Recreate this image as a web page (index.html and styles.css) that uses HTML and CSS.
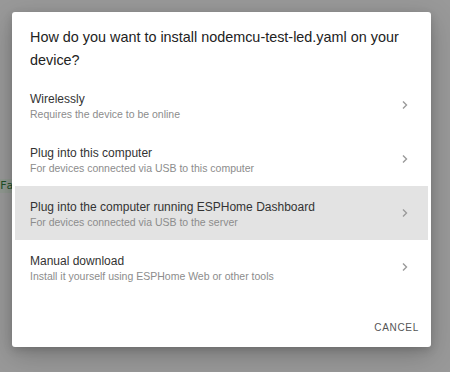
FILE: index.html
```html
<!DOCTYPE html>
<html lang="en">
<head>
    <meta charset="UTF-8">
    <title>Install</title>
    <link rel="stylesheet" href="styles.css">
</head>
<body>
    <div class="page">
        <div class="log">
            <span class="log-line">Failed to connect</span>
        </div>
        <div class="scrim"></div>

        <div class="dialog">
            <h2 class="dialog-title">How do you want to install nodemcu-test-led.yaml on your device?</h2>
            <div class="list">
                <div class="item">
                    <div class="item-text">
                        <div class="primary">Wirelessly</div>
                        <div class="secondary">Requires the device to be online</div>
                    </div>
                    <svg class="chevron" width="8" height="10" viewBox="0 0 8 10"><path d="M2 1.5 L5.5 5 L2 8.5" /></svg>
                </div>
                <div class="item">
                    <div class="item-text">
                        <div class="primary">Plug into this computer</div>
                        <div class="secondary">For devices connected via USB to this computer</div>
                    </div>
                    <svg class="chevron" width="8" height="10" viewBox="0 0 8 10"><path d="M2 1.5 L5.5 5 L2 8.5" /></svg>
                </div>
                <div class="item active">
                    <div class="item-text">
                        <div class="primary">Plug into the computer running ESPHome Dashboard</div>
                        <div class="secondary">For devices connected via USB to the server</div>
                    </div>
                    <svg class="chevron" width="8" height="10" viewBox="0 0 8 10"><path d="M2 1.5 L5.5 5 L2 8.5" /></svg>
                </div>
                <div class="item">
                    <div class="item-text">
                        <div class="primary">Manual download</div>
                        <div class="secondary">Install it yourself using ESPHome Web or other tools</div>
                    </div>
                    <svg class="chevron" width="8" height="10" viewBox="0 0 8 10"><path d="M2 1.5 L5.5 5 L2 8.5" /></svg>
                </div>
            </div>
            <div class="actions">
                <button class="cancel-btn">Cancel</button>
            </div>
        </div>
    </div>
</body>
</html>
```

FILE: styles.css
```css
body {
    margin: 0;
    font-family: 'Liberation Sans', Arial, sans-serif;
}

.page {
    position: relative;
    width: 450px;
    height: 372px;
    overflow: hidden;
    background: #e9e9e9;
}

.log {
    padding-top: 175px;
}

.log-line {
    display: inline-block;
    background: #dce8dc;
    color: #2f7a3c;
    font-family: 'DejaVu Sans Mono', monospace;
    font-size: 11px;
    line-height: 14px;
}

.scrim {
    position: absolute;
    inset: 0;
    background: rgba(0, 0, 0, 0.34);
}

.dialog {
    position: absolute;
    left: 12px;
    top: 12px;
    width: 419px;
    height: 335px;
    background: #fff;
    border-radius: 3px;
    box-shadow: 0 8px 28px rgba(0, 0, 0, 0.22), 0 3px 8px rgba(0, 0, 0, 0.15);
    display: flex;
    flex-direction: column;
}

.dialog-title {
    margin: 0;
    padding: 14px 12px 0 18px;
    font-size: 14.4px;
    font-weight: normal;
    line-height: 23px;
    color: #222;
}

.list {
    margin: 6px 3px 0 3px;
}

.item {
    display: flex;
    height: 54px;
    padding: 0 19px 0 15px;
}

.item.active {
    background: #e3e3e3;
}

.item-text {
    flex: 1;
    padding-top: 13px;
}

.primary {
    font-size: 12px;
    line-height: 16px;
    color: #333;
}

.secondary {
    font-size: 10.5px;
    line-height: 15px;
    color: #8c8c8c;
}

.chevron {
    align-self: center;
    fill: none;
    stroke: #9a9a9a;
    stroke-width: 1.4;
}

.actions {
    margin-top: auto;
    display: flex;
    justify-content: flex-end;
    padding: 6px;
}

.cancel-btn {
    height: 27px;
    padding: 0 6px;
    border: none;
    background: none;
    font-family: 'Liberation Sans', Arial, sans-serif;
    font-size: 10px;
    letter-spacing: 0.7px;
    text-transform: uppercase;
    color: #555;
}
```
